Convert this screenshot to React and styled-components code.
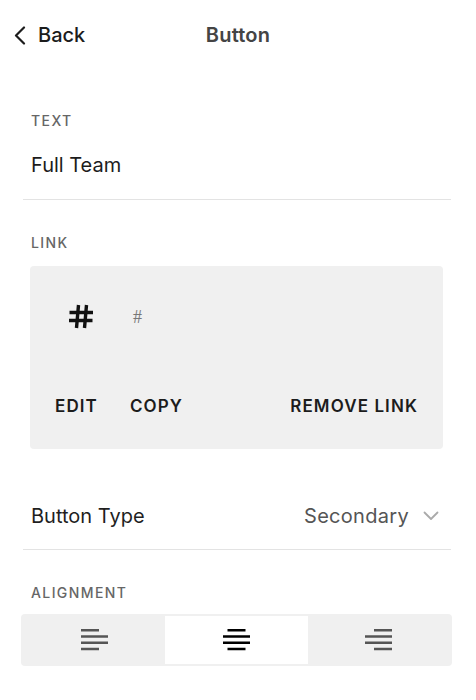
import React from 'react'
import styled, { createGlobalStyle } from 'styled-components'

const GlobalStyle = createGlobalStyle`
  html, body {
    margin: 0;
    padding: 0;
    background: #ffffff;
  }
  body {
    font-family: Inter, "Liberation Sans", sans-serif;
    color: #1f1f1f;
    -webkit-font-smoothing: antialiased;
  }
`

const Page = styled.div`
  width: 476px;
  min-height: 700px;
  background: #fff;
`

const Header = styled.header`
  display: grid;
  grid-template-columns: 1fr auto 1fr;
  align-items: center;
  height: 70px;
  padding: 0 14px;
  box-sizing: border-box;
`

const BackButton = styled.button`
  display: flex;
  align-items: center;
  gap: 12px;
  justify-self: start;
  border: 0;
  background: none;
  padding: 0;
  font-family: Inter, "Liberation Sans", sans-serif;
  font-size: 20px;
  font-weight: 500;
  color: #1c1c1c;
  cursor: pointer;
`

const Title = styled.h1`
  margin: 0;
  font-size: 20px;
  font-weight: 600;
  letter-spacing: 0.2px;
  color: #444;
`

const Section = styled.section`
  margin: ${(p) => p.top || 0}px 25px 0 23px;
  padding-bottom: ${(p) => p.bottom || 0}px;
  border-bottom: ${(p) => (p.divided ? '1px solid #e3e3e3' : '0')};
`

const Label = styled.div`
  padding-left: 8px;
  font-size: 14px;
  line-height: 20px;
  font-weight: 500;
  letter-spacing: 1.4px;
  color: #666;
  text-transform: uppercase;
`

const Value = styled.div`
  margin-top: ${(p) => p.top || 0}px;
  padding-left: 8px;
  font-size: 20px;
  line-height: 24px;
  color: #1c1c1c;
`

const LinkBox = styled.div`
  margin: 13px 33px 0 30px;
  height: 183px;
  background: #f0f0f0;
  border-radius: 4px;
  display: flex;
  flex-direction: column;
  padding: 0 25px;
  box-sizing: border-box;
`

const LinkPreview = styled.div`
  display: flex;
  align-items: center;
  height: 100px;
  padding-left: 13px;
  gap: 39px;
`

const HashIcon = styled.svg`
  display: block;
  color: #111;
`

const SmallHash = styled.span`
  font-family: "Liberation Serif", serif;
  font-size: 18px;
  color: #777;
  margin-top: 3px;
`

const Actions = styled.div`
  display: flex;
  align-items: center;
  gap: 32px;
  margin-top: 30px;
`

const Action = styled.button`
  border: 0;
  background: none;
  padding: 0;
  margin-left: ${(p) => (p.push ? 'auto' : '0')};
  font-family: Inter, "Liberation Sans", sans-serif;
  font-size: 17px;
  font-weight: 600;
  letter-spacing: 1.1px;
  color: #1c1c1c;
  cursor: pointer;
`

const SelectRow = styled.div`
  display: flex;
  align-items: center;
  justify-content: space-between;
  padding: 0 12px 0 8px;
  font-size: 20px;
  line-height: 24px;
`

const SelectValue = styled.div`
  display: flex;
  align-items: center;
  gap: 14px;
  letter-spacing: 0.3px;
  color: #555;
`

const Segmented = styled.div`
  display: grid;
  grid-template-columns: repeat(3, 1fr);
  margin: 11px 24px 0 21px;
  height: 52px;
  padding: 2px;
  box-sizing: border-box;
  background: #f0f0f0;
  border-radius: 4px;
`

const Segment = styled.button`
  display: flex;
  align-items: center;
  justify-content: center;
  border: 0;
  padding: 0;
  background: ${(p) => (p.active ? '#fff' : 'transparent')};
  color: ${(p) => (p.active ? '#000' : '#555')};
  cursor: pointer;
`

const Chevron = () => (
  <svg width="12" height="19" viewBox="0 0 12 19" fill="none">
    <path d="M10 1.5 2 9.5l8 8" stroke="#1c1c1c" strokeWidth="2.2" strokeLinecap="round" strokeLinejoin="round" />
  </svg>
)

const DownChevron = () => (
  <svg width="16" height="10" viewBox="0 0 16 10" fill="none">
    <path d="M1.5 1.5 8 8l6.5-6.5" stroke="#aaa" strokeWidth="1.8" strokeLinecap="round" strokeLinejoin="round" />
  </svg>
)

const Hash = () => (
  <HashIcon width="26" height="25" viewBox="0 0 26 25" fill="none">
    <path
      d="M10.5 1 8.5 24M18.5 1 16.5 24M1.5 8.5H25M1 16.5H24.5"
      stroke="currentColor"
      strokeWidth="3.4"
    />
  </HashIcon>
)

// line lengths per row: short, long, long, short
const AlignIcon = ({ align }) => {
  const rows = [18, 27, 27, 18]
  const ys = [1.25, 7.5, 13.75, 20]
  return (
    <svg width="27" height="22" viewBox="0 0 27 22">
      {rows.map((w, i) => {
        let x = 0
        if (align === 'center') x = (27 - w) / 2
        if (align === 'right') x = 27 - w
        return <rect key={i} x={x} y={ys[i] - 1.25} width={w} height="2.5" fill="currentColor" />
      })}
    </svg>
  )
}

export default function App() {
  return (
    <Page>
      <GlobalStyle />
      <Header>
        <BackButton>
          <Chevron />
          Back
        </BackButton>
        <Title>Button</Title>
        <span />
      </Header>

      <Section top={41} bottom={22} divided>
        <Label>Text</Label>
        <Value top={22}>Full Team</Value>
      </Section>

      <Section top={33}>
        <Label>Link</Label>
      </Section>
      <LinkBox>
        <LinkPreview>
          <Hash />
          <SmallHash>#</SmallHash>
        </LinkPreview>
        <Actions>
          <Action>EDIT</Action>
          <Action>COPY</Action>
          <Action push>REMOVE LINK</Action>
        </Actions>
      </LinkBox>

      <Section top={55} bottom={21} divided>
        <SelectRow>
          <span>Button Type</span>
          <SelectValue>
            Secondary
            <DownChevron />
          </SelectValue>
        </SelectRow>
      </Section>

      <Section top={33}>
        <Label>Alignment</Label>
      </Section>
      <Segmented>
        <Segment>
          <AlignIcon align="left" />
        </Segment>
        <Segment active>
          <AlignIcon align="center" />
        </Segment>
        <Segment>
          <AlignIcon align="right" />
        </Segment>
      </Segmented>
    </Page>
  )
}
